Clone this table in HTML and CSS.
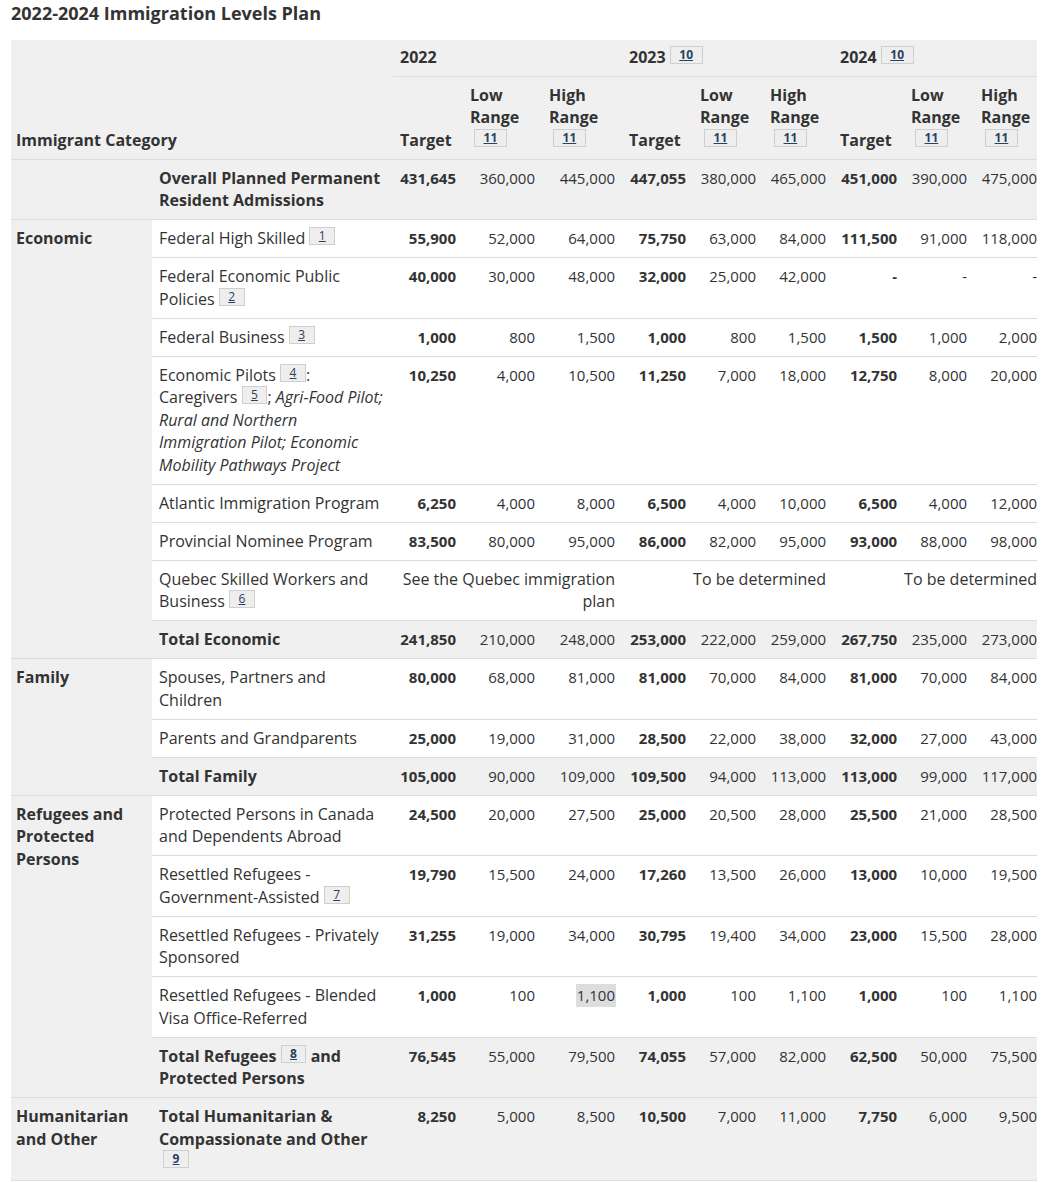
FILE: index.html
```html
<!DOCTYPE html>
<html lang="en">
<head>
<meta charset="utf-8">
<title>2022-2024 Immigration Levels Plan</title>
<link rel="stylesheet" href="styles.css">
</head>
<body>
<h2 class="title">2022-2024 Immigration Levels Plan</h2>
<table class="plan">
  <colgroup>
    <col class="c-cat"><col class="c-item">
    <col class="c-t1"><col class="c-l1"><col class="c-h1">
    <col class="c-t2"><col class="c-l2"><col class="c-h2">
    <col class="c-t3"><col class="c-l3"><col class="c-h3">
  </colgroup>
  <thead>
    <tr class="yr">
      <th class="cat-head" colspan="2" rowspan="2">Immigrant Category</th>
      <th colspan="3" class="year">2022</th>
      <th colspan="3" class="year">2023 <sup class="fn"><a href="#fn10">10</a></sup></th>
      <th colspan="3" class="year">2024 <sup class="fn"><a href="#fn10">10</a></sup></th>
    </tr>
    <tr class="sub">
      <th>Target</th>
      <th>Low Range <sup class="fn fn-start"><a href="#fn11">11</a></sup></th>
      <th>High Range <sup class="fn fn-start"><a href="#fn11">11</a></sup></th>
      <th>Target</th>
      <th>Low Range <sup class="fn fn-start"><a href="#fn11">11</a></sup></th>
      <th>High Range <sup class="fn fn-start"><a href="#fn11">11</a></sup></th>
      <th>Target</th>
      <th>Low Range <sup class="fn fn-start"><a href="#fn11">11</a></sup></th>
      <th class="last">High Range <sup class="fn fn-start"><a href="#fn11">11</a></sup></th>
    </tr>
  </thead>
  <tbody>
    <tr class="total">
      <th class="cat"></th>
      <th class="item">Overall Planned Permanent Resident Admissions</th>
      <td class="tg">431,645</td><td>360,000</td><td>445,000</td>
      <td class="tg">447,055</td><td>380,000</td><td>465,000</td>
      <td class="tg">451,000</td><td>390,000</td><td class="last">475,000</td>
    </tr>
  </tbody>
  <tbody>
    <tr>
      <th class="cat" rowspan="9">Economic</th>
      <td class="item">Federal High Skilled <sup class="fn"><a href="#fn1">1</a></sup></td>
      <td class="tg">55,900</td><td>52,000</td><td>64,000</td>
      <td class="tg">75,750</td><td>63,000</td><td>84,000</td>
      <td class="tg">111,500</td><td>91,000</td><td class="last">118,000</td>
    </tr>
    <tr>
      <td class="item">Federal Economic Public Policies <sup class="fn"><a href="#fn2">2</a></sup></td>
      <td class="tg">40,000</td><td>30,000</td><td>48,000</td>
      <td class="tg">32,000</td><td>25,000</td><td>42,000</td>
      <td class="tg">-</td><td>-</td><td class="last">-</td>
    </tr>
    <tr>
      <td class="item">Federal Business <sup class="fn"><a href="#fn3">3</a></sup></td>
      <td class="tg">1,000</td><td>800</td><td>1,500</td>
      <td class="tg">1,000</td><td>800</td><td>1,500</td>
      <td class="tg">1,500</td><td>1,000</td><td class="last">2,000</td>
    </tr>
    <tr>
      <td class="item">Economic Pilots <sup class="fn"><a href="#fn4">4</a></sup>: Caregivers <sup class="fn"><a href="#fn5">5</a></sup>; <em>Agri-Food Pilot; Rural and Northern Immigration Pilot; Economic Mobility Pathways Project</em></td>
      <td class="tg">10,250</td><td>4,000</td><td>10,500</td>
      <td class="tg">11,250</td><td>7,000</td><td>18,000</td>
      <td class="tg">12,750</td><td>8,000</td><td class="last">20,000</td>
    </tr>
    <tr>
      <td class="item">Atlantic Immigration Program</td>
      <td class="tg">6,250</td><td>4,000</td><td>8,000</td>
      <td class="tg">6,500</td><td>4,000</td><td>10,000</td>
      <td class="tg">6,500</td><td>4,000</td><td class="last">12,000</td>
    </tr>
    <tr>
      <td class="item">Provincial Nominee Program</td>
      <td class="tg">83,500</td><td>80,000</td><td>95,000</td>
      <td class="tg">86,000</td><td>82,000</td><td>95,000</td>
      <td class="tg">93,000</td><td>88,000</td><td class="last">98,000</td>
    </tr>
    <tr>
      <td class="item">Quebec Skilled Workers and Business <sup class="fn"><a href="#fn6">6</a></sup></td>
      <td colspan="3" class="note">See the Quebec immigration plan</td>
      <td colspan="3" class="note">To be determined</td>
      <td colspan="3" class="note last">To be determined</td>
    </tr>
    <tr class="total">
      <th class="item">Total Economic</th>
      <td class="tg">241,850</td><td>210,000</td><td>248,000</td>
      <td class="tg">253,000</td><td>222,000</td><td>259,000</td>
      <td class="tg">267,750</td><td>235,000</td><td class="last">273,000</td>
    </tr>
  </tbody>
  <tbody>
    <tr>
      <th class="cat" rowspan="3">Family</th>
      <td class="item">Spouses, Partners and Children</td>
      <td class="tg">80,000</td><td>68,000</td><td>81,000</td>
      <td class="tg">81,000</td><td>70,000</td><td>84,000</td>
      <td class="tg">81,000</td><td>70,000</td><td class="last">84,000</td>
    </tr>
    <tr>
      <td class="item">Parents and Grandparents</td>
      <td class="tg">25,000</td><td>19,000</td><td>31,000</td>
      <td class="tg">28,500</td><td>22,000</td><td>38,000</td>
      <td class="tg">32,000</td><td>27,000</td><td class="last">43,000</td>
    </tr>
    <tr class="total">
      <th class="item">Total Family</th>
      <td class="tg">105,000</td><td>90,000</td><td>109,000</td>
      <td class="tg">109,500</td><td>94,000</td><td>113,000</td>
      <td class="tg">113,000</td><td>99,000</td><td class="last">117,000</td>
    </tr>
  </tbody>
  <tbody>
    <tr>
      <th class="cat" rowspan="5">Refugees and Protected Persons</th>
      <td class="item">Protected Persons in Canada and Dependents Abroad</td>
      <td class="tg">24,500</td><td>20,000</td><td>27,500</td>
      <td class="tg">25,000</td><td>20,500</td><td>28,000</td>
      <td class="tg">25,500</td><td>21,000</td><td class="last">28,500</td>
    </tr>
    <tr>
      <td class="item">Resettled Refugees - Government-Assisted <sup class="fn"><a href="#fn7">7</a></sup></td>
      <td class="tg">19,790</td><td>15,500</td><td>24,000</td>
      <td class="tg">17,260</td><td>13,500</td><td>26,000</td>
      <td class="tg">13,000</td><td>10,000</td><td class="last">19,500</td>
    </tr>
    <tr>
      <td class="item">Resettled Refugees - Privately Sponsored</td>
      <td class="tg">31,255</td><td>19,000</td><td>34,000</td>
      <td class="tg">30,795</td><td>19,400</td><td>34,000</td>
      <td class="tg">23,000</td><td>15,500</td><td class="last">28,000</td>
    </tr>
    <tr>
      <td class="item">Resettled Refugees - Blended Visa Office-Referred</td>
      <td class="tg">1,000</td><td>100</td><td><span class="mark">1,100</span></td>
      <td class="tg">1,000</td><td>100</td><td>1,100</td>
      <td class="tg">1,000</td><td>100</td><td class="last">1,100</td>
    </tr>
    <tr class="total">
      <th class="item">Total Refugees <sup class="fn"><a href="#fn8">8</a></sup> and Protected Persons</th>
      <td class="tg">76,545</td><td>55,000</td><td>79,500</td>
      <td class="tg">74,055</td><td>57,000</td><td>82,000</td>
      <td class="tg">62,500</td><td>50,000</td><td class="last">75,500</td>
    </tr>
  </tbody>
  <tbody>
    <tr class="total">
      <th class="cat">Humanitarian and Other</th>
      <th class="item">Total Humanitarian &amp; Compassionate and Other <sup class="fn fn-start"><a href="#fn9">9</a></sup></th>
      <td class="tg">8,250</td><td>5,000</td><td>8,500</td>
      <td class="tg">10,500</td><td>7,000</td><td>11,000</td>
      <td class="tg">7,750</td><td>6,000</td><td class="last">9,500</td>
    </tr>
  </tbody>
</table>
</body>
</html>
```
FILE: styles.css
```css
html, body {
  background: #fff;
}
body {
  margin: 0;
  padding: 0 8px 0 11px;
  font-family: "Open Sans", "Noto Sans", sans-serif;
  font-size: 16px;
  line-height: 22.5px;
  color: #333;
}
.title {
  margin: 0 0 13px;
  font-size: 18px;
  line-height: 27px;
  font-weight: 700;
  color: #333;
}
.plan {
  width: 1026px;
  table-layout: fixed;
  border-collapse: collapse;
}
.c-cat { width: 141px; }
.c-item { width: 241px; }
.c-t1 { width: 70px; }
.c-l1 { width: 79px; }
.c-h1 { width: 80px; }
.c-t2 { width: 71px; }
.c-l2 { width: 70px; }
.c-h2 { width: 70px; }
.c-t3 { width: 71px; }
.c-l3 { width: 70px; }
.c-h3 { width: 63px; }

.plan th, .plan td {
  padding: 7px 7px 7.5px 7px;
  border-bottom: 1px solid #dcdcdc;
  text-align: right;
  vertical-align: top;
}
.plan td {
  padding-left: 2px;
  font-size: 15px;
}
.plan td.item,
.plan td.note {
  font-size: 16px;
}
.plan thead th {
  background: #f0f0f0;
  text-align: left;
  font-weight: 700;
}
.plan thead .yr th {
  padding-top: 6px;
  padding-bottom: 7px;
}
.plan thead .sub th,
.plan thead .cat-head {
  vertical-align: bottom;
  padding-bottom: 7.5px;
}
.plan .cat-head,
.plan .cat {
  padding-left: 5px;
}
.plan .last {
  padding-right: 0;
}
.plan tbody th.cat {
  background: #f0f0f0;
  text-align: left;
  font-weight: 700;
}
.plan .item {
  text-align: left;
  padding-left: 7px;
}
.plan th.item {
  font-weight: 700;
}
.plan td {
  background: #fff;
  font-weight: 400;
}
.plan .tg {
  font-weight: 700;
}
.plan tr.total td,
.plan tr.total th {
  background: #f0f0f0;
}
.plan em {
  font-style: italic;
}
.fn {
  font-size: 12px;
  line-height: 16px;
  vertical-align: baseline;
  position: relative;
  top: -4px;
}
.fn-start {
  margin-left: 4px;
}
.fn a {
  display: inline-block;
  padding: 0 8.5px;
  line-height: 16px;
  border: 1px solid #cfcfcf;
  background: #eeeeee;
  color: #284162;
  text-decoration: underline;
}
.mark {
  display: inline-block;
  background: #dddddd;
  padding: 0 1px;
  margin-right: -1px;
}
```
